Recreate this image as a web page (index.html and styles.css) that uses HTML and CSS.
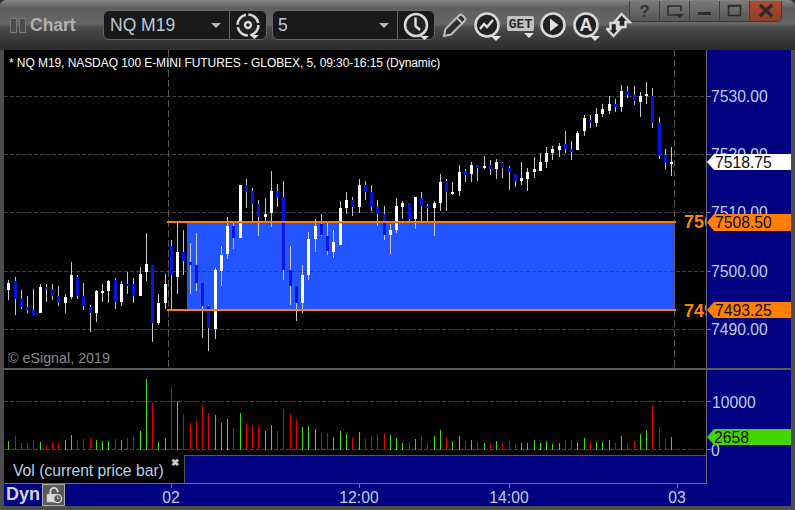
FILE: index.html
```html
<!DOCTYPE html>
<html lang="en">
<head>
<meta charset="utf-8">
<title>Chart</title>
<link rel="stylesheet" href="styles.css">
</head>
<body>
<div class="window">
  <header class="titlebar">
    <div class="brand"><span class="grip"></span><span class="grip"></span><span class="brand-name">Chart</span></div>
    <div class="combo combo-symbol">
      <span class="combo-value">NQ M19</span><span class="caret"></span>
      <span class="combo-btn">
        <svg class="icon" viewBox="0 0 30 30"><circle cx="15" cy="14" r="10.500" class="ring" stroke-dasharray="14 2.500"/><circle cx="15" cy="14" r="3" class="ring-thin"/><path d="M17 24h9l-4.500 4z" class="solid"/></svg>
      </span>
    </div>
    <div class="combo combo-interval">
      <span class="combo-value">5</span><span class="caret"></span>
      <span class="combo-btn">
        <svg class="icon" viewBox="0 0 30 30"><circle cx="15" cy="14" r="11" class="ring"/><path d="M14.500 6.500v8.500l4.500 4" class="hand"/><path d="M19 25h9l-4.500 4z" class="solid"/></svg>
      </span>
    </div>
    <div class="tools">
      <svg class="tool tool-pencil" viewBox="0 0 26 26"><path d="M2 24l1.500-7L17 3.500a2.500 2.500 0 0 1 3.500 0l2 2a2.500 2.500 0 0 1 0 3.500L9 22.500z" class="outline"/><path d="M15 6l5 5" class="outline"/></svg>
      <svg class="tool tool-circle" viewBox="0 0 30 30"><circle cx="13" cy="13" r="11.500" class="ring"/><path d="M6 17l4-5 3 3 6-7" class="hand"/><path d="M17 24h10l-5 5z" class="solid"/></svg>
      <svg class="tool tool-get" viewBox="0 0 30 26"><rect x="0" y="0" width="16" height="15" rx="2" class="badge"/><rect x="12" y="0" width="15" height="15" rx="2" class="badge"/><text x="13.500" y="12" class="get-text">GET</text><path d="M17 17h10l-5 5z" class="solid"/></svg>
      <svg class="tool tool-circle" viewBox="0 0 30 30"><circle cx="13" cy="13" r="11.500" class="ring"/><path d="M10 6.500l8.500 6.500-8.500 6.500z" class="solid"/></svg>
      <svg class="tool tool-circle" viewBox="0 0 30 30"><circle cx="13" cy="13" r="11.500" class="ring"/><text x="13" y="19" class="a-text">A</text><path d="M17 24h10l-5 5z" class="solid"/></svg>
      <svg class="tool tool-swap" viewBox="0 0 26 26"><path d="M15.500 2l8 8h-4v5h-7v-5h-4z" class="arrow-up"/><path d="M7.500 24l-6.500-7h3.500v-6h6.500v6h3z" class="arrow-down"/></svg>
    </div>
    <div class="winbtns">
      <span class="winbtn"><span class="winbtn-q">?</span></span>
      <span class="winbtn"><svg class="winicon" viewBox="0 0 20 16"><path d="M12 12H3V3h13v5" class="dark-line"/><path d="M10 11h9l-4.500 4z" class="dark-fill"/></svg></span>
      <span class="winbtn"><svg class="winicon" viewBox="0 0 20 16"><rect x="3" y="9" width="13" height="3" class="dark-fill"/></svg></span>
      <span class="winbtn"><svg class="winicon" viewBox="0 0 20 16"><rect x="3.500" y="2.500" width="12" height="10" class="dark-line"/><path d="M3 3h13" class="dark-line"/></svg></span>
      <span class="winbtn winbtn-close"><svg class="winicon" viewBox="0 0 20 16"><path d="M4 2l12 11M16 2L4 13" class="x-line"/></svg></span>
    </div>
  </header>

  <section class="pane pane-price">
    <div class="plot">
      <svg class="chart-svg" viewBox="4 50 702 318" width="702" height="318">
        <rect x="187" y="222" width="488" height="88" class="zone"/>
        <path d="M4 96.500h702M4 154.500h702M4 212.500h702M4 271.500h702M4 329.500h702" class="grid"/>
        <path d="M168.500 50V368M674.500 50V368" class="vgrid"/>
        <g transform="translate(.5 0)">
          <path class="wick" d="M8 280V300M15 277V315M21 290V309M27 296V313M33 289V315M40 284V313M46 284V302M52 284V300M58 286V306M65 294V313M71 262V299M77 275V299M83 283V310M90 305V332M96 290V322M102 284V302M108 280V303M115 278V309M121 281V306M127 272V294M133 278V303M140 267V296M146 233V281M152 265V342M158 294V325M165 274V309M171 240V309M177 222V294M183 230V275M190 243V294M196 233V291M202 283V338M208 305V351M215 268V339M221 246V286M227 217V259M233 223V249M240 185V238M246 179V208M252 188V222M258 200V236M265 198V223M271 171V227M277 184V207M283 181V280M290 246V305M296 286V321M302 265V313M308 232V280M315 219V252M321 214V236M327 222V255M333 230V258M340 201V245M346 192V214M352 197V216M359 179V213M365 181V200M371 185V211M377 200V226M384 206V240M390 224V254M396 198V233M402 201V219M409 203V223M415 197V229M421 192V223M427 204V222M434 201V236M440 174V211M446 179V211M452 182V195M459 165V196M465 169V182M471 162V182M477 165V181M484 156V169M490 160V175M496 159V179M502 162V178M509 166V190M515 174V187M521 162V185M527 168V191M534 157V178M540 153V171M546 147V168M552 146V160M559 143V157M565 131V153M571 141V160M577 131V150M584 115V136M590 115V128M596 108V127M602 104V117M609 96V114M615 99V112M621 85V112M627 86V98M634 86V105M640 92V117M646 82V104M652 88V128M659 117V159M665 149V169M671 147V176"/>
          <path class="body-up" d="M8 283V290M40 287V313M65 297V303M71 275V297M96 291V313M102 291V293M108 281V291M121 284V302M140 274V296M146 264V272M158 303V323M165 284V303M177 252V277M215 270V329M221 255V271M227 226V254M240 185V238M265 214V217M271 191V213M302 275V303M308 239V275M315 226V239M333 242V252M340 208V245M346 200V208M359 185V207M390 230V235M396 206V230M402 203V207M415 197V219M434 203V208M440 182V203M452 192V194M459 172V191M471 165V174M484 166V168M496 162V169M521 178V181M527 172V179M534 169V172M540 162V171M546 153V162M552 149V153M559 146V150M577 133V150M584 118V131M596 114V123M602 109V114M609 104V111M621 91V107M640 96V102M646 94V96M671 162V164"/>
          <path class="body-down" d="M15 281V299M21 299V307M27 307V310M33 310V315M46 287V289M52 289V296M58 296V303M77 277V296M83 296V306M90 307V313M115 280V302M127 284V286M133 284V296M152 265V323M171 246V275M183 252V261M190 262V265M196 265V283M202 283V306M208 306V328M233 226V238M246 185V192M252 191V204M258 204V217M277 191V197M283 197V270M290 270V286M296 286V303M321 224V235M327 236V251M352 200V207M365 185V192M371 192V207M377 207V214M384 214V235M409 203V219M421 198V206M427 206V208M446 181V192M465 171V175M477 165V168M490 165V169M502 163V168M509 168V172M515 174V181M565 144V149M571 149V152M590 120V123M615 104V107M627 91V95M634 95V101M652 96V123M659 123V156M665 155V163"/>
        </g>
        <path d="M167 222h509M167 310h509" class="level"/>
        <text x="684" y="228" class="level-text">7508.50</text>
        <text x="684" y="317" class="level-text">7493.25</text>
        <text x="9" y="67" class="study-title">* NQ M19, NASDAQ 100 E-MINI FUTURES - GLOBEX, 5, 09:30-16:15 (Dynamic)</text>
        <text x="8" y="363" class="copyright">© eSignal, 2019</text>
      </svg>
    </div>
    <div class="axis">
      <svg class="chart-svg" viewBox="707 50 84 318" width="84" height="318">
        <path d="M707 96.500h4M707 154.500h4M707 212.500h4M707 271.500h4M707 329.500h4" class="tick"/>
        <text x="711" y="102" class="axis-text">7530.00</text>
        <text x="711" y="160" class="axis-text">7520.00</text>
        <text x="711" y="218" class="axis-text">7510.00</text>
        <text x="711" y="277" class="axis-text">7500.00</text>
        <text x="711" y="335" class="axis-text">7490.00</text>
        <path d="M707 162l7-8h77v16h-77z" class="flag-white"/>
        <text x="715" y="168" class="flag-text">7518.75</text>
        <path d="M707 222.500l7-8.500h77v17h-77z" class="flag-orange"/>
        <text x="715" y="228" class="flag-text">7508.50</text>
        <path d="M707 310l7-8h77v16h-77z" class="flag-orange"/>
        <text x="715" y="316" class="flag-text">7493.25</text>
      </svg>
    </div>
  </section>

  <section class="pane pane-volume">
    <div class="plot plot-volume">
      <svg class="chart-svg" viewBox="4 370 702 85" width="702" height="85">
        <path d="M4 401.500h702M4 449.500h702" class="grid"/>
        <g transform="translate(.5 0)">
          <path class="vol-up" d="M8 441V450M40 442V450M65 440V450M71 435V450M96 440V450M102 441V450M108 441V450M121 440V450M140 431V450M146 379V450M158 442V450M165 438V450M177 401V450M215 415V450M221 423V450M227 419V450M240 413V450M265 431V450M271 425V450M302 427V450M308 426V450M315 429V450M333 437V450M340 431V450M346 434V450M359 432V450M390 435V450M396 438V450M402 443V450M415 439V450M434 436V450M440 430V450M452 441V450M459 436V450M471 440V450M484 443V450M496 441V450M521 443V450M527 443V450M534 440V450M540 443V450M546 441V450M552 444V450M559 443V450M577 442V450M584 438V450M596 442V450M602 442V450M609 440V450M621 436V450M640 434V450M646 430V450M671 437V450"/>
          <path class="vol-down" d="M15 436V450M21 443V450M27 443V450M33 441V450M46 445V450M52 442V450M58 443V450M77 440V450M83 439V450M90 438V450M115 439V450M127 438V450M133 437V450M152 403V450M171 386V450M183 414V450M190 423V450M196 421V450M202 405V450M208 413V450M233 428V450M246 423V450M252 425V450M258 426V450M277 431V450M283 409V450M290 414V450M296 420V450M321 433V450M327 433V450M352 437V450M365 439V450M371 436V450M377 434V450M384 433V450M409 442V450M421 436V450M427 442V450M446 437V450M465 441V450M477 442V450M490 443V450M502 443V450M509 441V450M515 444V450M565 440V450M571 440V450M590 442V450M615 443V450M627 443V450M634 441V450M652 405V450M659 427V450M665 439V450"/>
        </g>
      </svg>
      <div class="legend">
        <div class="legend-label">Vol (current price bar)<span class="legend-close">✖</span></div>
        <div class="legend-fill"></div>
      </div>
    </div>
    <div class="axis">
      <svg class="chart-svg" viewBox="707 370 84 113" width="84" height="113">
        <path d="M707 401.500h4M707 449.500h4" class="tick"/>
        <text x="712" y="408" class="axis-text">10000</text>
        <text x="711" y="456" class="axis-text">0</text>
        <path d="M707 437l7-8h77v16h-77z" class="flag-green"/>
        <text x="714" y="443" class="flag-text">2658</text>
      </svg>
    </div>
  </section>

  <footer class="timebar">
    <svg class="time-svg" viewBox="4 483 787 23" width="787" height="23">
      <path d="M4 483.500h703" class="time-rule"/>
      <path d="M171.500 484v4M359.500 484v4M509.500 484v4M677.500 484v4" class="tick"/>
      <text x="171" y="503" class="time-text">02</text>
      <text x="359" y="503" class="time-text">12:00</text>
      <text x="509" y="503" class="time-text">14:00</text>
      <text x="677" y="503" class="time-text">03</text>
    </svg>
    <span class="dyn">Dyn</span>
    <span class="lock">
      <svg class="lock-icon" viewBox="0 0 22 20"><path d="M7 10V6a4 4 0 0 1 8 0v1" class="lock-shackle"/><rect x="3" y="9" width="11" height="9" rx="1" class="lock-body"/><circle cx="15" cy="14" r="4.500" class="lock-clock"/><path d="M15 11.500V14h2" class="lock-hand"/></svg>
    </span>
  </footer>
</div>
</body>
</html>
```
FILE: styles.css
```css
* { box-sizing: border-box; }
html, body { margin: 0; padding: 0; background: #2b2b2b; }
body { width: 795px; height: 510px; overflow: hidden; font-family: "Liberation Sans", Arial, sans-serif; }
svg { display: block; }
svg text { font-family: "Liberation Sans", Arial, sans-serif; }

.window { width: 795px; height: 510px; padding: 0 4px 4px; background: #4d4d4d; border-radius: 6px 6px 0 0; display: flex; flex-direction: column; position: relative; }

/* Title bar */
.titlebar { height: 50px; margin: 0 -4px; padding: 0 0 0 10px; display: flex; align-items: flex-start; background: linear-gradient(#858585 0, #5e5e5e 8px, #666 24px, #4c4c4c 27px, #2b2b2b 50px); border-radius: 6px 6px 0 0; position: relative; }
.brand { width: 93px; display: flex; align-items: center; height: 50px; }
.grip { width: 7px; height: 15px; margin-right: 2px; background: #4a4a4a; border: 1px solid #7a7a7a; }
.brand-name { margin-left: 2px; font-size: 17.5px; font-weight: 700; color: #b0b0b0; }
.combo { height: 30px; margin-top: 10px; display: flex; align-items: center; background: #191919; border: 1px solid #666; border-radius: 6px; position: relative; }
.combo-symbol { width: 164px; }
.combo-interval { width: 163px; margin-left: 5px; }
.combo-value { font-size: 17.5px; color: #b9c9dc; margin-left: 6px; }
.combo-interval .combo-value { margin-left: 5px; }
.caret { position: absolute; right: 45px; top: 12px; width: 0; height: 0; border-left: 5px solid transparent; border-right: 5px solid transparent; border-top: 5px solid #b8b8b8; }
.combo-btn { position: absolute; right: 0; top: 0; width: 37px; height: 28px; border-left: 1px solid #666; display: flex; align-items: center; justify-content: center; }
.icon { width: 30px; height: 30px; margin-top: 1px; }
.ring { fill: #222; stroke: #d8d8d8; stroke-width: 2.600; }
.ring-thin { fill: #222; stroke: #d8d8d8; stroke-width: 2.400; }
.hand { fill: none; stroke: #e0e0e0; stroke-width: 2.400; }
.solid { fill: #e4e4e4; }
.tools { display: flex; align-items: flex-start; }
.tool { display: block; flex: none; }
.tool-pencil { width: 26px; height: 26px; margin: 12px 0 0 7px; }
.outline { fill: #2c2c2c; stroke: #bcbcbc; stroke-width: 2; }
.tool-circle { width: 30px; height: 30px; margin: 12px 0 0 3px; }
.tool-pencil + .tool-circle { margin-left: 6px; }
.tool-get { width: 30px; height: 26px; margin: 16px 0 0 3px; }
.badge { fill: #c2c2c2; }
.get-text { font-size: 13px; font-weight: 700; fill: #2a2a2a; text-anchor: middle; font-family: "Liberation Mono", monospace; }
.a-text { font-size: 18px; font-weight: 700; fill: #e0e0e0; text-anchor: middle; }
.tool-swap { width: 26px; height: 26px; margin: 12px 0 0 3px; }
.arrow-up, .arrow-down { fill: #222; stroke: #d8d8d8; stroke-width: 2.400; }

.winbtns { position: absolute; right: 13px; top: 1px; height: 21px; display: flex; border: 1px solid #3c3c3c; border-top: 0; border-radius: 0 0 5px 5px; overflow: hidden; }
.winbtn { width: 30px; height: 20px; display: flex; align-items: center; justify-content: center; background: linear-gradient(#7a7a7a, #555); border-right: 1px solid #3e3e3e; }
.winbtn-close { width: 31px; background: linear-gradient(#b3492f, #8f3d2a); border-right: 0; }
.winbtn-q { font-size: 17px; font-weight: 700; color: #333; line-height: 1; }
.winicon { width: 20px; height: 16px; }
.dark-line { fill: none; stroke: #2b2b2b; stroke-width: 1.600; }
.dark-fill { fill: #2b2b2b; }
.x-line { stroke: #2b2b2b; stroke-width: 3.400; fill: none; }

/* Panes */
.pane { display: flex; }
.pane-price { height: 318px; }
.pane-volume { height: 115px; border-top: 2px solid #5c5c5c; }
.plot { width: 702px; background: #000; overflow: hidden; }
.plot-volume { display: flex; flex-direction: column; }
.axis { width: 85px; background: #000080; border-left: 1px solid #6a6a6a; }
.chart-svg { overflow: hidden; flex: none; }
.zone { fill: #2255ff; }
.grid { stroke: #404040; stroke-width: 1; stroke-dasharray: 4 2; fill: none; }
.vgrid { stroke: #585858; stroke-width: 1; stroke-dasharray: 7 3; fill: none; }
.wick { stroke: #c8c8c8; stroke-width: 1; fill: none; }
.body-up { stroke: #fff; stroke-width: 3; fill: none; }
.body-down { stroke: #0014e6; stroke-width: 3; fill: none; }
.level { stroke: #ff8000; stroke-width: 2; fill: none; }
.level-text { font-size: 18px; font-weight: 700; fill: #ff8400; }
.study-title { font-size: 12px; letter-spacing: -.07px; fill: #fff; }
.copyright { font-size: 14.300px; fill: #8a8a8a; }
.tick { stroke: #777; stroke-width: 1; fill: none; }
.axis-text { font-size: 15.700px; fill: #bfcfe6; }
.flag-white { fill: #fff; }
.flag-orange { fill: #ff8000; }
.flag-green { fill: #44d400; }
.flag-text { font-size: 15.700px; fill: #0c0c0c; }
.vol-up { stroke: #44dd00; stroke-width: 1; fill: none; }
.vol-down { stroke: #e60000; stroke-width: 1; fill: none; }

.legend { height: 28px; flex: none; display: flex; }
.legend-label { width: 180px; padding: 7px 0 0 9px; font-size: 15.700px; color: #bcd0ea; white-space: nowrap; position: relative; }
.legend-close { position: absolute; left: 167px; top: 2px; font-size: 10px; font-weight: 700; color: #cfcfcf; }
.legend-fill { flex: 1; background: #000080; border-top: 1px solid #555; border-left: 1px solid #555; }

/* Time axis */
.timebar { height: 23px; background: #000080; position: relative; display: flex; align-items: center; padding-left: 2px; }
.time-svg { position: absolute; left: 0; top: 0; }
.time-rule { stroke: #6a6a6a; stroke-width: 1; fill: none; }
.time-text { font-size: 15.700px; fill: #bfcfe6; text-anchor: middle; }
.dyn { position: relative; font-size: 18px; font-weight: 700; color: #d4d4d4; }
.lock { position: relative; width: 23px; height: 22px; margin-left: 2px; margin-top: 1px; background: #5a5a5a; border: 1px solid #aaa; display: flex; align-items: center; justify-content: center; }
.lock-icon { width: 20px; height: 18px; }
.lock-shackle { fill: none; stroke: #d8d8d8; stroke-width: 2; }
.lock-body { fill: #d8d8d8; }
.lock-clock { fill: #5a5a5a; stroke: #d8d8d8; stroke-width: 1.500; }
.lock-hand { fill: none; stroke: #d8d8d8; stroke-width: 1; }
```
